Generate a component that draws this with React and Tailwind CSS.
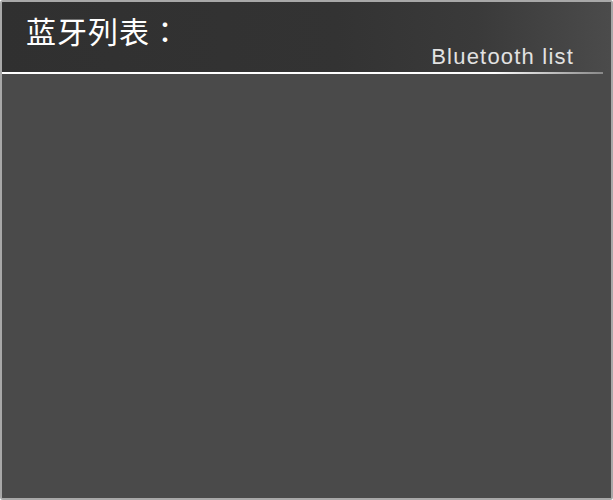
import React from 'react'

function App() {
  return (
    <div className="w-[613px] h-[500px] bg-[#4a4a4a] border-2 border-[#a8a8a8] rounded-[3px] overflow-hidden flex flex-col">
      {/* HEADER */}
      <div className="h-[70px] shrink-0 flex items-start justify-between bg-[linear-gradient(90deg,#303030_0%,#333333_55%,#3a3a3a_78%,#4b4b4b_100%)]">
        <h1 className="pl-[24px] pt-[8px] text-[30px] leading-[40px] tracking-[1px] font-normal text-white font-['Noto_Sans_CJK_TC',sans-serif]">
          蓝牙列表：
        </h1>
        <span className="pr-[37px] pt-[41px] text-[22px] leading-[28px] tracking-[1.2px] text-[#e2e2e2] font-['Liberation_Sans',sans-serif]">
          Bluetooth list
        </span>
      </div>
      <div className="h-[2px] shrink-0 mr-[8px] bg-[linear-gradient(90deg,#ffffff_0%,#ffffff_82%,#888888_100%)]"></div>
      {/* LIST BODY */}
      <div className="flex-1 bg-[#4a4a4a]"></div>
    </div>
  )
}

export default App
